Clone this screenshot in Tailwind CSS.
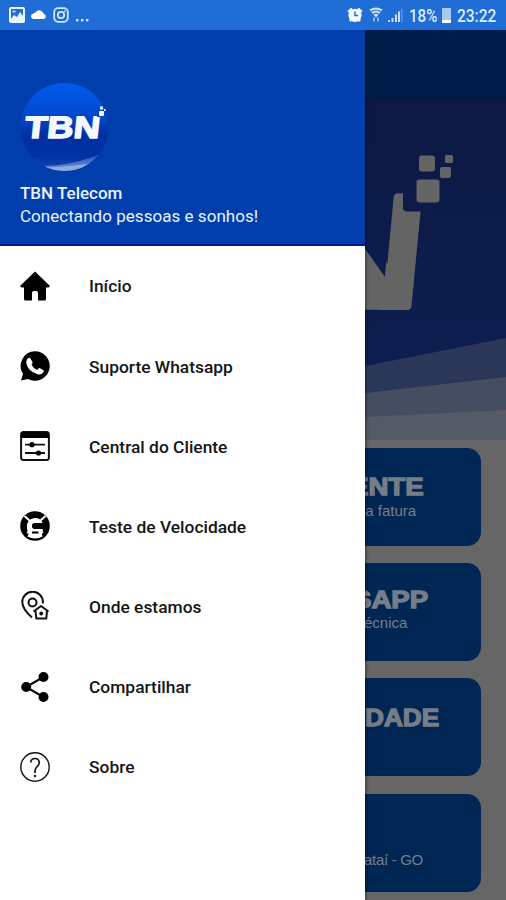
<!DOCTYPE html>
<html lang="pt-BR">
<head>
<meta charset="utf-8">
<title>TBN Telecom</title>
<script src="https://cdn.jsdelivr.net/npm/@tailwindcss/browser@4"></script>
</head>
<body class="w-[506px] h-[900px] overflow-hidden bg-white font-[Roboto,sans-serif] flex flex-col">
  <header class="h-[30px] shrink-0 bg-[#1f6dd5] text-[#dcecff] flex items-center justify-between pl-[9px] pr-[9px]">
    <div class="flex items-center gap-[6px]">
      <svg class="w-[16px] h-[16px]" viewBox="0 0 16 16"><rect x="1" y="1" width="14" height="14" rx="1" fill="#1f6dd5" stroke="#e9f5ff" stroke-width="2"/><path d="M2 12l3-4 3 2 3-5 3 4v5H2z" fill="#e9f5ff"/><rect x="3.500" y="3.500" width="3" height="2" fill="#b8d6f7"/></svg>
      <svg class="w-[16px] h-[16px]" viewBox="0 0 16 16"><path d="M2.500 12a2.700 2.700 0 0 1-.5-5.300Q3 6 4.500 5.500A4 4 0 0 1 11.500 5q1 1 1.500 2.200a2.500 2.500 0 0 1 0 4.800z" fill="#fff"/></svg>
      <svg class="w-[16px] h-[16px]" viewBox="0 0 16 16" fill="none" stroke="#d4e8fb"><rect x="1.200" y="1.200" width="13.600" height="13.600" rx="4" stroke-width="1.800"/><circle cx="8" cy="8" r="3.200" stroke-width="1.800"/><circle cx="11.800" cy="4.200" r=".6"/></svg>
      <svg class="w-[14px] h-[16px]" viewBox="-1 0 14 16" fill="#d4e8fb"><rect x="0" y="12" width="2.400" height="2.400"/><rect x="5" y="12" width="2.400" height="2.400"/><rect x="10" y="12" width="2.400" height="2.400"/></svg>
    </div>
    <div class="flex items-center">
      <svg class="w-[16px] h-[16px] mr-[6px]" viewBox="0 0 16 16"><circle cx="8" cy="8.300" r="6.600" fill="#f2f9ff"/><path d="M.5 4L4 .8 6 2.500 2 6zM15.500 4L12 .8l-2 1.700L14 6zM2 13l2-1.500 1.500 1.500L3.500 15zM14 13l-2-1.500-1.500 1.500 2 2z" fill="#f2f9ff"/><path d="M8 4.500V8.500h3" fill="none" stroke="#1f6dd5" stroke-width="1.500"/></svg>
      <svg class="w-[14px] h-[16px] mr-[5px]" viewBox="0 0 14 16" fill="none" stroke="#d4e8fb" stroke-width="2"><path d="M1 3.500q6-4 12 0M3 6q4-3 8 0"/><path d="M4.500 7.500q2.500-1.500 5 0L7 10.500z" fill="#d4e8fb" stroke="none"/><path d="M5 10.500v4M9 10.500v4" stroke="#83b1ea" stroke-width="2"/></svg>
      <svg class="w-[15px] h-[16px] mr-[6px]" viewBox="0 0 15 16"><path d="M0 13h2v2H0zM3.500 11h2v4h-2zM7 7.500h2V15H7zM10 4.500h2V15h-2z" fill="#c5ddf8"/><path d="M13 2h1.500v13H13z" fill="#5a97e3"/></svg>
      <span class="block w-[29px] text-[18px] leading-[30px] font-medium"><span class="inline-block origin-left scale-x-[.84] mt-[2px]">18%</span></span>
      <span class="flex flex-col justify-end w-[9px] h-[15px] bg-[#a7c9f1] ml-[4px] mr-[6px] mt-[1px]"><span class="h-[3px] bg-white"></span></span>
      <span class="block w-[40px] text-[18px] leading-[30px] font-medium"><span class="inline-block origin-left scale-x-[.86] mt-[2px]">23:22</span></span>
    </div>
  </header>

  <div class="flex flex-1 min-h-0">
    <aside class="w-[365px] shrink-0 bg-white z-10 shadow-[1px_1px_3px_rgba(0,0,0,.45)] [clip-path:inset(0_-6px_0_0)]">
      <div class="h-[216px] bg-[#003eae] border-b-2 border-[#00188c] pt-[50px] pl-[20px] text-[#eaf3ff]">
        <svg class="block w-[90px] h-[94px]" viewBox="20 80 90 94">
          <defs>
            <linearGradient id="ball" x1="0" y1="0" x2="0" y2="1"><stop offset="0" stop-color="#005df0"/><stop offset=".35" stop-color="#004bd0"/><stop offset=".6" stop-color="#0030a0"/><stop offset=".8" stop-color="#0030a4"/><stop offset="1" stop-color="#1850b8"/></linearGradient>
            <linearGradient id="swoosh" x1="0" y1="0" x2="0" y2="1"><stop offset="0" stop-color="#1c50b8"/><stop offset="1" stop-color="#7f9fd8"/></linearGradient>
            <clipPath id="round"><circle cx="64.500" cy="127" r="44"/></clipPath>
          </defs>
          <g clip-path="url(#round)"><rect x="20" y="80" width="90" height="94" fill="url(#ball)"/><path d="M40 166Q75 166 105 152V176H40z" fill="url(#swoosh)"/><path d="M40 167q30 1 62-6v16H40z" fill="#8fabdc"/></g>
          <text transform="translate(24 137.800) skewX(-6)" x="0" y="0" textLength="75" lengthAdjust="spacingAndGlyphs" font-family="Liberation Sans" font-weight="bold" font-size="31" fill="#f4f8ff" stroke="#f4f8ff" stroke-width="1.600" stroke-linejoin="round">TBN</text>
          <rect x="97" y="110" width="8" height="7" fill="#0044c0"/><g fill="#f4f8ff"><rect x="99" y="111" width="5" height="5" rx="1"/><rect x="100" y="106.500" width="3" height="3"/><rect x="104" y="109" width="1.500" height="2"/></g>
        </svg>
        <div class="mt-[8px] h-[23px] leading-[23px] text-[17px] font-medium whitespace-nowrap">TBN Telecom</div>
        <div class="h-[23px] leading-[23px] text-[17px] whitespace-nowrap tracking-[.04px]">Conectando pessoas e sonhos!</div>
      </div>

      <nav class="text-[17.400px] font-medium text-[#151515]">
        <a class="flex items-center h-[80.100px] pl-[20px] gap-[39px]">
          <svg class="w-[30px] h-[30px]" viewBox="0 0 30 30"><path d="M15 .5L30 15l-1.500 1.500H26V28q0 1.500-1.500 1.500H18V22q0-2-2-2h-2q-2 0-2 2v7.500H5.500Q4 29.500 4 28V16.500H1.500L0 15z"/></svg>
          <span class="mt-px">Início</span></a>
        <a class="flex items-center h-[80.100px] pl-[20px] gap-[39px]">
          <svg class="w-[30px] h-[30px]" viewBox="0 0 30 30"><path d="M15 .3a14.700 14.700 0 1 1-7 27.600L1 29.500l2-6.500A14.700 14.700 0 0 1 15 .3z"/><path d="M7 8.500Q9 5.500 10.500 7.500l2 3.500q.5 1-1 2.500 1.500 3.500 5.500 5.500l1.500-1.500q.8-.8 2 0l3 1.800q1 .8-.5 2.500-2 2.500-5.500 1.500Q8 20 6.500 13q-.5-2.500.5-4.500z" fill="#fff"/></svg>
          <span class="mt-px">Suporte Whatsapp</span></a>
        <a class="flex items-center h-[80.100px] pl-[20px] gap-[39px]">
          <svg class="w-[30px] h-[30px]" viewBox="0 0 30 30"><rect x="1.100" y="1.100" width="27.800" height="27.800" rx="2.500" fill="none" stroke="#111" stroke-width="2"/><path d="M1 7V3q0-2 2-2h24q2 0 2 2v4z"/><path d="M5 13.700h20M5 22h20" stroke="#111" stroke-width="1.800"/><circle cx="12" cy="13.700" r="2.600"/><circle cx="18.500" cy="22" r="2.600"/></svg>
          <span class="mt-px">Central do Cliente</span></a>
        <a class="flex items-center h-[80.100px] pl-[20px] gap-[39px]">
          <svg class="w-[30px] h-[30px]" viewBox="0 0 30 30"><circle cx="15" cy="15" r="14.800"/><path d="M9 9.500Q12 6.500 16 7q5 .5 6.500 5H15a3 3 0 0 0 0 6h7.500l.5 1-1.500 3 1 3.500Q15 29.500 7.500 25.500L9 22 7 18.500V13z" fill="#fff"/><path d="M4.500 5l5.500 5M25.500 5L20 10M7 21l2.500 1M23 21l-2.500 1" stroke="#fff" stroke-width="2"/><path d="M15 12.200l6 .3q4 .8 4 2.500t-4 2.300l-6 .5a2.800 2.800 0 0 1 0-5.600zM12 20.500h6.500v2H12z"/></svg>
          <span class="mt-px">Teste de Velocidade</span></a>
        <a class="flex items-center h-[80.100px] pl-[20px] gap-[39px]">
          <svg class="w-[30px] h-[30px]" viewBox="0 0 30 30" fill="none" stroke="#111" stroke-width="2"><path d="M12 26.500Q2.300 18 2.300 11a10.300 10.300 0 0 1 20.600 0v1.500"/><circle cx="12.500" cy="11.500" r="4"/><path d="M13.500 20.500L21 15l7.500 5.500M15.500 20l.8 7.500h10L27 20" stroke-linejoin="round"/><circle cx="21.200" cy="22.500" r="1" fill="#111"/></svg>
          <span class="mt-px">Onde estamos</span></a>
        <a class="flex items-center h-[80.100px] pl-[20px] gap-[39px]">
          <svg class="w-[30px] h-[30px]" viewBox="0 0 30 30"><path d="M23.500 5L6 15l17.500 10" fill="none" stroke="#111" stroke-width="2.200"/><circle cx="23.500" cy="5" r="5"/><circle cx="6.200" cy="15" r="5"/><circle cx="23.500" cy="25" r="5"/></svg>
          <span class="mt-px">Compartilhar</span></a>
        <a class="flex items-center h-[80.100px] pl-[20px] gap-[39px]">
          <svg class="w-[30px] h-[30px]" viewBox="0 0 30 30" fill="none" stroke="#111" stroke-width="1.400"><circle cx="15" cy="15" r="14.200"/><path d="M10.800 10.500Q11 6.500 15 6.500t4.200 4q0 2-2 4T15 18.500V21" stroke-width="1.700"/><circle cx="15" cy="24" r=".5"/></svg>
          <span class="mt-px">Sobre</span></a>
      </nav>
    </aside>

    <main class="flex-1 min-w-0 bg-[#666] overflow-hidden">
      <div class="h-[69px] bg-[#001d49] border-b border-[#07163c]"></div>
      <svg class="block w-[141px] h-[341px]" viewBox="365 99 141 341">
        <defs><linearGradient id="sky" x1="0" y1="0" x2="0" y2="1"><stop offset="0" stop-color="#0d1843"/><stop offset="1" stop-color="#0c2053"/></linearGradient></defs>
        <rect x="365" y="99" width="141" height="341" fill="url(#sky)"/>
        <path d="M365 366L506 338V440H365z" fill="#2a3758"/>
        <path d="M365 393L506 377V440H365z" fill="#454d60"/>
        <path d="M365 417L506 410V440H365z" fill="#555a66"/>
        <text transform="translate(304 306) skewX(-5.500)" font-family="Liberation Sans" font-weight="bold" font-size="158" fill="#646464" stroke="#646464" stroke-width="8" stroke-linejoin="round">N</text>
        <path d="M365 205h26.500L384.800 277 365 249z" fill="#0c1c4b"/>
        <path d="M365 249l19.800 28L386 309.800h-21z" fill="#646464"/>
        <path d="M403 188h22v23.500h-18q-4 0-4-4z" fill="#0d1b49"/>
        <g fill="#646464"><rect x="416.500" y="179.500" width="23" height="23" rx="3"/><rect x="419" y="155.500" width="16" height="16" rx="3"/><rect x="440" y="167" width="11" height="11" rx="2"/><rect x="445" y="155" width="8" height="8" rx="1.500"/></g>
      </svg>
      <div class="flex flex-col gap-[17.300px] pt-[7.700px] pr-[25.500px] font-['Liberation_Sans',sans-serif] text-[#777d88]">
        <section class="h-[98px] rounded-r-[14px] bg-[#002654] pt-[25px] overflow-hidden">
          <div class="ml-[-15px] h-[26px] leading-[28px] text-[24px] font-bold whitespace-nowrap origin-left scale-x-[1.150] [-webkit-text-stroke:1.300px_#777d88]">ENTE</div>
          <div class="ml-[-8px] h-[24px] leading-[24px] text-[15px] whitespace-nowrap">ua fatura</div>
        </section>
        <section class="h-[98px] rounded-r-[14px] bg-[#002654] pt-[23px] overflow-hidden">
          <div class="ml-[-12px] h-[26px] leading-[28px] text-[24px] font-bold whitespace-nowrap origin-left scale-x-[1.150] [-webkit-text-stroke:1.300px_#777d88]">SAPP</div>
          <div class="ml-[-1px] h-[24px] leading-[22px] text-[15px] whitespace-nowrap">écnica</div>
        </section>
        <section class="h-[98px] rounded-r-[14px] bg-[#002654] pt-[26px] overflow-hidden">
          <div class="h-[26px] leading-[28px] text-[24px] font-bold whitespace-nowrap origin-left scale-x-[1.090] [-webkit-text-stroke:1.300px_#777d88]">DADE</div>
        </section>
        <section class="h-[98px] rounded-r-[14px] bg-[#002654] pt-[54px] overflow-hidden">
          <div class="ml-[-1px] h-[24px] leading-[24px] text-[15px] tracking-[-.3px] whitespace-nowrap">ataí - GO</div>
        </section>
      </div>
    </main>
  </div>
</body>
</html>
